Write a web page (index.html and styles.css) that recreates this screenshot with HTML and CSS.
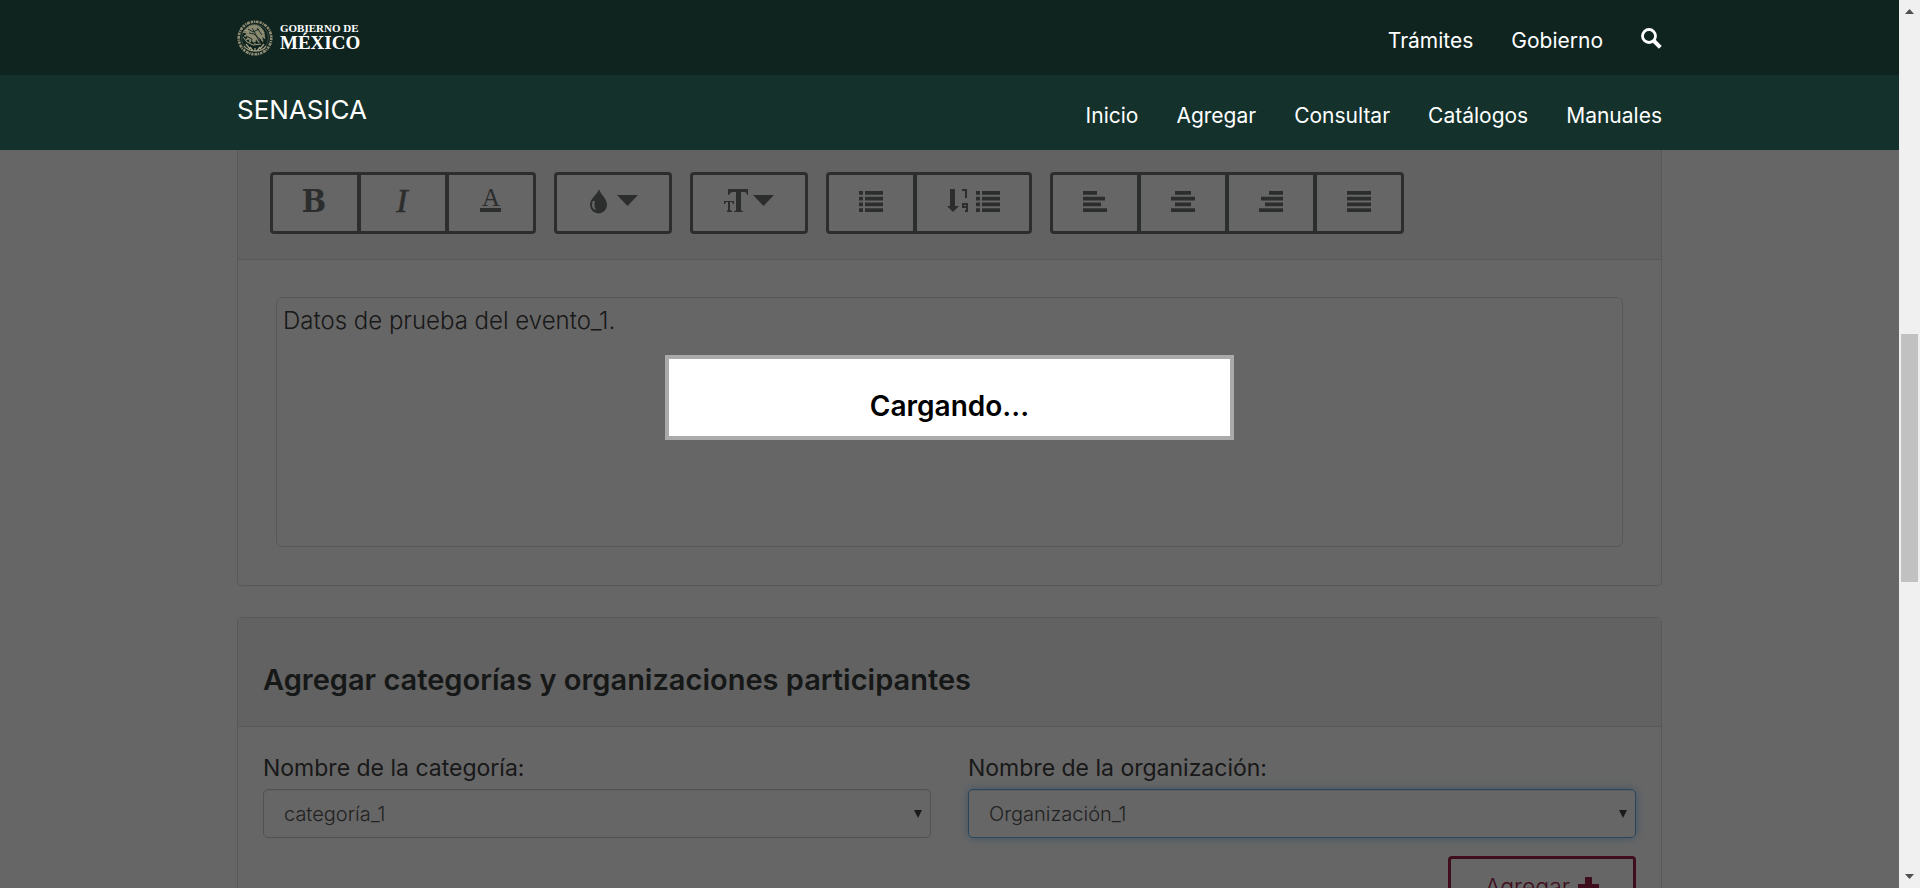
FILE: index.html
```html
<!DOCTYPE html>
<html lang="es">
<head>
<meta charset="utf-8">
<meta name="viewport" content="width=device-width, initial-scale=1">
<title>SENASICA</title>
<link rel="stylesheet" href="styles.css">
</head>
<body>
<svg class="symbols" aria-hidden="true">
  <symbol id="list" viewBox="0 0 24 24">
    <path d="M0 2h4v3.700H0zM6 2h18v3.700H6zM0 7.800h4v3.700H0zM6 7.800h18v3.700H6zM0 13.600h4v3.700H0zM6 13.600h18v3.700H6zM0 19.300h4v3.700H0zM6 19.300h18v3.700H6z"/>
  </symbol>
  <symbol id="caret" viewBox="0 0 21 24"><path d="M0 6h21L10.500 17z"/></symbol>
</svg>
<div class="window">
  <div class="page">
    <header class="gov-bar">
      <div class="container bar-row">
        <a class="brand" href="#">
          <svg class="seal" viewBox="0 0 36 36" fill="none" stroke="#a39f82" aria-hidden="true">
            <circle cx="18" cy="18" r="16.300" stroke-width="2.600" stroke-dasharray="2.200 .9 1.200 .7 3 1" opacity=".85"/>
            <circle cx="18" cy="18" r="13.500" stroke-width=".6" opacity=".5"/>
            <path d="M7 26c4 6 18 7 22 0M9 24l4 5M13 27l3 4M27 24l-4 5M23 27l-3 4M18 28v3" stroke-width="1.300"/>
            <path d="M8 11c1-3 5-6 9-6 5 0 8 3 10 7l1 7-3-3 1 6-4-4v5l-3-4-1 5-3-3-3 2 1-4-4 1 2-3-4-1 3-2-3-2 4-1z" fill="#8c8a70" stroke-width=".7" stroke-dasharray="1.500 .7"/>
            <path d="M11 9l5 3 6-3M12 13l5 1 7 6M15 8l3 5 4 8M9 16l6 3-1 5 5-2 3 4M20 8l5 7M10 21l4 3" stroke="#0f241f" stroke-width=".9"/>
            <path d="M6 17l4 5 6 3 8-1M6 13l2-3 3 1" stroke-width="1"/>
          </svg>
          <span class="brand-text"><span class="brand-top">GOBIERNO DE</span><span class="brand-main">MÉXICO</span></span>
        </a>
        <nav class="links" aria-label="Gobierno">
          <a href="#">Trámites</a>
          <a href="#">Gobierno</a>
          <a href="#" class="search" aria-label="Buscar">
            <svg viewBox="0 0 21 21" width="21" height="21" fill="none" stroke="#fff" aria-hidden="true"><circle cx="8" cy="8" r="6.500" stroke-width="2.800"/><path d="M13 13l6.300 6.300" stroke-width="4"/></svg>
          </a>
        </nav>
      </div>
    </header>
    <div class="site-bar">
      <div class="container bar-row">
        <a class="site-name" href="#">SENASICA</a>
        <nav class="links" aria-label="SENASICA">
          <a href="#">Inicio</a>
          <a href="#">Agregar</a>
          <a href="#">Consultar</a>
          <a href="#">Catálogos</a>
          <a href="#">Manuales</a>
        </nav>
      </div>
    </div>
    <main class="content">
      <div class="container">
        <section class="panel panel-scrolled">
          <div class="panel-head toolbar" role="toolbar" aria-label="Formato">
            <div class="group">
              <button type="button" class="tool" aria-label="Negrita"><svg class="icon" viewBox="0 0 24 24"><text x="11" y="23" font-size="32" font-weight="bold" class="narrow">B</text></svg></button>
              <button type="button" class="tool" aria-label="Cursiva"><svg class="icon" viewBox="0 0 24 24"><text x="11" y="23" font-size="34" font-style="italic" stroke-width=".6" stroke="#6f7271">I</text></svg></button>
              <button type="button" class="tool" aria-label="Color de texto"><svg class="icon" viewBox="0 0 24 24"><text x="12" y="17" font-size="25">A</text><path d="M1 19h21v4H1z"/></svg></button>
            </div>
            <div class="group">
              <button type="button" class="tool wide" aria-label="Color">
                <svg class="icon" viewBox="0 0 24 24"><path fill-rule="evenodd" d="M11 0c1 5 8 9 8 16a8 8 0 0 1-17 0C2 9 10 5 11 0zM5 12c-2 4-1 8 3 9-2-3-2-6-1-9z"/></svg>
                <svg class="caret"><use href="#caret"/></svg>
              </button>
            </div>
            <div class="group">
              <button type="button" class="tool wide" aria-label="Tamaño de texto">
                <svg class="icon" viewBox="0 0 24 24"><path d="M4 0h20v6h-1c0-2-1-3-3-3h-3v17c0 2 1 2 2 2v1h-9v-1c2 0 2 0 2-2V3H9C7 3 6 4 5 6H4zM0 12h10v3H9l-1-2H6v8l2 1v1H3v-1l1-1v-8H2l-1 2H0z"/></svg>
                <svg class="caret"><use href="#caret"/></svg>
              </button>
            </div>
            <div class="group">
              <button type="button" class="tool" aria-label="Lista"><svg class="icon"><use href="#list"/></svg></button>
              <button type="button" class="tool wide" aria-label="Lista numerada">
                <svg class="icon" viewBox="0 0 24 24"><path fill-rule="evenodd" d="M3 0h5v17h4l-6 6-6-6h3zM15 0h5v9h-2V2h-3zM15 14h6v9h-3v-2h1v-2h-4zM17 16v1h2v-1z"/></svg>
                <svg class="icon"><use href="#list"/></svg>
              </button>
            </div>
            <div class="group">
              <button type="button" class="tool" aria-label="Alinear a la izquierda"><svg class="icon" viewBox="0 0 24 24"><path d="M0 2h14v3.700H0zM0 7.800h22v3.700H0zM0 13.600h18v3.700H0zM0 19.300h24v3.700H0z"/></svg></button>
              <button type="button" class="tool" aria-label="Centrar"><svg class="icon" viewBox="0 0 24 24"><path d="M4 2h16v3.700H4zM0 7.800h24v3.700H0zM4 13.600h16v3.700H4zM0 19.300h24v3.700H0z"/></svg></button>
              <button type="button" class="tool" aria-label="Alinear a la derecha"><svg class="icon" viewBox="0 0 24 24"><path d="M10 2h14v3.700H10zM2 7.800h22v3.700H2zM6 13.600h18v3.700H6zM0 19.300h24v3.700H0z"/></svg></button>
              <button type="button" class="tool" aria-label="Justificar"><svg class="icon" viewBox="0 0 24 24"><path d="M0 2h24v3.700H0zM0 7.800h24v3.700H0zM0 13.600h24v3.700H0zM0 19.300h24v3.700H0z"/></svg></button>
            </div>
          </div>
          <div class="editor-body">
            <textarea class="editor" aria-label="Descripción del evento">Datos de prueba del evento_1.</textarea>
          </div>
        </section>

        <section class="panel">
          <div class="panel-head title-head"><h2 class="title">Agregar categorías y organizaciones participantes</h2></div>
          <form class="form">
            <div class="fields">
              <div class="field">
                <label for="categoria">Nombre de la categoría:</label>
                <div class="select-wrap"><select id="categoria"><option>categoría_1</option></select></div>
              </div>
              <div class="field">
                <label for="organizacion">Nombre de la organización:</label>
                <div class="select-wrap"><select id="organizacion" class="active"><option>Organización_1</option></select></div>
              </div>
            </div>
            <button type="button" class="add">Agregar
              <svg viewBox="0 0 21 21" width="21" height="21" aria-hidden="true"><path d="M7 0h7v7h7v7h-7v7H7v-7H0V7h7z"/></svg>
            </button>
          </form>
        </section>
      </div>
    </main>
    <div class="overlay"></div>
    <div class="dialog" role="dialog" aria-labelledby="loading"><h1 id="loading">Cargando...</h1></div>
  </div>
  <div class="scrollbar" aria-hidden="true">
    <svg viewBox="0 0 17 21"><path d="M4 13h9L8.500 8z"/></svg>
    <div class="track"><div class="thumb"></div></div>
    <svg viewBox="0 0 17 21"><path d="M4 8h9l-4.500 5z"/></svg>
  </div>
</div>
</body>
</html>
```
FILE: styles.css
```css
* { box-sizing: border-box; }

body {
  margin: 0;
  overflow: hidden;
  background: #fff;
  color: #404041;
  font-family: Inter, "Open Sans", sans-serif;
  font-size: 23px;
  font-weight: 300;
}

a { color: inherit; text-decoration: none; }
button, select, textarea { font: inherit; color: inherit; }

.symbols { position: absolute; width: 0; height: 0; }

.window { display: flex; height: 100vh; }

.page {
  position: relative;
  flex: 1;
  min-width: 0;
  display: flex;
  flex-direction: column;
}

.container {
  width: 100%;
  max-width: 1425px;
  margin: 0 auto;
}

/* Top bars */
.gov-bar, .site-bar {
  position: relative;
  z-index: 2;
  flex: none;
  color: #fff;
}
.gov-bar { background: #0f241f; }
.site-bar { background: #14312b; }
.bar-row {
  display: flex;
  justify-content: space-between;
  height: 75px;
}
.brand { display: flex; align-items: center; gap: 7px; }
.seal { width: 36px; height: 36px; }
.brand-text {
  display: flex;
  flex-direction: column;
  font-family: "Liberation Serif", serif;
  font-weight: 700;
}
.brand-top { font-size: 11px; line-height: 10px; }
.brand-main { font-size: 19px; line-height: 20px; }

.links {
  display: flex;
  align-items: center;
  gap: 38px;
  padding-top: 5px;
  font-size: 21px;
  font-weight: 400;
}
.search { display: flex; padding-bottom: 4px; }
.site-name {
  padding-top: 20px;
  font-size: 26px;
  line-height: 30px;
  font-weight: 400;
}

/* Panels */
.content { flex: 1; min-height: 0; overflow: hidden; }

.panel {
  margin-bottom: 31px;
  border: 1px solid #ddd;
  border-radius: 5px;
  box-shadow: 0 1px 1px rgba(0, 0, 0, .05);
}
.panel-scrolled { border-top: 0; border-radius: 0 0 5px 5px; }
.panel-head {
  background: #f5f5f5;
  border-bottom: 1px solid #ddd;
}

.toolbar {
  display: flex;
  flex-wrap: wrap;
  gap: 18px;
  padding: 22px 32px 25px;
}
.group { display: flex; }
.tool {
  display: flex;
  align-items: center;
  justify-content: center;
  gap: 5px;
  width: 90px;
  height: 62px;
  padding: 0 0 4px;
  border: 3px solid #6f7271;
  background: #fff;
}
.tool.wide { width: 118px; }
.tool + .tool { margin-left: -2px; }
.tool:first-child { border-radius: 4px 0 0 4px; }
.tool:last-child { border-radius: 0 4px 4px 0; }
.tool:only-child { border-radius: 4px; }
.icon, .caret {
  width: 24px;
  height: 24px;
  fill: #6f7271;
  overflow: visible;
  font-family: "Liberation Serif", serif;
  text-anchor: middle;
}
.narrow { font-family: "DejaVu Serif Condensed", "Liberation Serif", serif; }
.caret { width: 21px; }

.editor-body { padding: 37px 38px 38px; }
.editor {
  display: block;
  width: 100%;
  height: 250px;
  padding: 8px 6px;
  border: 1px solid #ddd;
  border-radius: 6px;
  background: #fff;
  font-size: 24px;
  line-height: 30px;
  resize: none;
}

.title-head { padding: 44px 25px 28px; }
.title {
  margin: 0;
  color: #393c3e;
  font-size: 29px;
  line-height: 36px;
  font-weight: 600;
}

.form { padding: 26px 25px 0; }
.fields {
  display: grid;
  grid-template-columns: 1fr 1fr;
  gap: 37px;
}
.field label {
  display: block;
  margin-bottom: 6px;
  line-height: 30px;
  font-weight: 400;
}
.select-wrap { position: relative; }
.select-wrap::after {
  content: "";
  position: absolute;
  top: 21px;
  right: 9px;
  border: 4px solid transparent;
  border-top: 8px solid #444;
  border-bottom: 0;
}
.select-wrap select {
  display: block;
  width: 100%;
  height: 49px;
  padding: 0 20px;
  appearance: none;
  border: 1px solid #ccc;
  border-radius: 5px;
  background: #fff;
  box-shadow: inset 0 1px 1px rgba(0, 0, 0, .075);
  color: #555;
  font-size: 20px;
}
.select-wrap select.active {
  border-color: #66afe9;
  box-shadow: inset 0 1px 1px rgba(0, 0, 0, .075), 0 0 10px rgba(102, 175, 233, .6);
}
.add {
  display: flex;
  align-items: center;
  justify-content: center;
  gap: 8px;
  width: 188px;
  height: 62px;
  margin: 18px 0 0 auto;
  border: 3px solid #9d2449;
  border-radius: 4px;
  background: #fff;
  color: #9d2449;
}
.add svg { fill: currentColor; }

/* Loading state */
.overlay {
  position: absolute;
  z-index: 1;
  inset: 0;
  background: rgba(0, 0, 0, .6);
}
.dialog {
  position: absolute;
  z-index: 3;
  top: 40%;
  left: 35%;
  width: 30%;
  height: 85px;
  padding-top: 30px;
  border: 4px solid #aaa;
  background: #fff;
  color: #000;
  text-align: center;
}
.dialog h1 {
  margin: 0;
  font-size: 28px;
  line-height: 34px;
  font-weight: 600;
}

/* Window scrollbar */
.scrollbar {
  display: flex;
  flex-direction: column;
  flex: none;
  width: 21px;
  padding: 1px 2px;
  background: #f0f0f0;
}
.scrollbar svg { width: 17px; height: 21px; fill: #505050; }
.track { flex: 1; }
.thumb { height: 248px; margin-top: 312px; background: #c1c1c1; }
```
